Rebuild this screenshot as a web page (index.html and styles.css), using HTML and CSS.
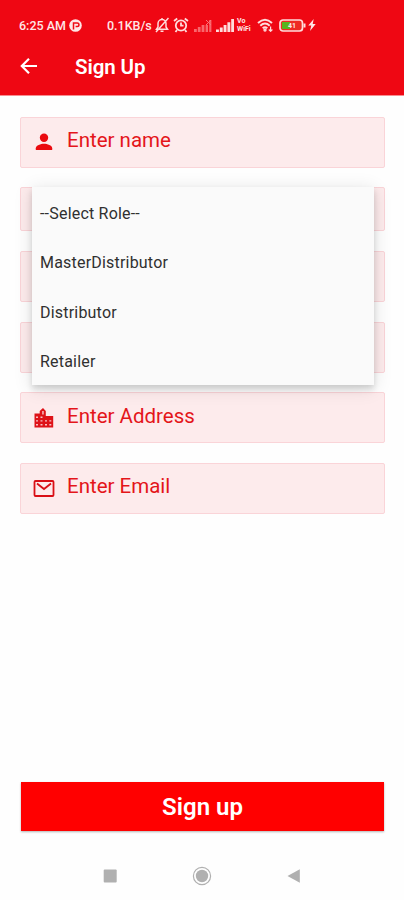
FILE: index.html
```html
<!DOCTYPE html>
<html lang="en">
<head>
  <meta charset="UTF-8">
  <meta name="viewport" content="width=device-width, initial-scale=1">
  <title>Sign Up</title>
  <link rel="stylesheet" href="styles.css">
</head>
<body>
  <div class="screen">
    <header class="top">
      <div class="status-bar">
        <span class="time">6:25 AM</span>
        <svg class="app-dot" viewBox="0 0 13 13" width="13" height="13">
          <circle cx="6.5" cy="6.5" r="6.3" fill="#ffe6e6"/>
          <path d="M4.5 10.5V4h3.7a1.7 1.7 0 0 1 0 3.5H6.6" fill="none" stroke="#ef0a14" stroke-width="1.5"/>
        </svg>
        <span class="speed">0.1KB/s</span>
        <div class="status-icons">
          <svg class="bell" viewBox="0 0 14 16" width="14" height="16" fill="none" stroke="#ffdcdc" stroke-width="1.5">
            <path d="M1.5 12.2h11L11 10V6.5a4 4 0 0 0-8 0V10zM5.5 14.3h3M7 1v2M1 15L13.5 1"/>
          </svg>
          <svg class="alarm" viewBox="0 0 16 16" width="16" height="16" fill="none" stroke="#ffdcdc" stroke-width="1.8">
            <circle cx="8" cy="8.5" r="5.2"/>
            <path d="M1 4l3.2-2.5M15 4l-3.2-2.5M8 5.5v3.2h2.5M4 13l-1.5 2M12 13l1.5 2"/>
          </svg>
          <svg class="signal-off" viewBox="0 0 18 13" width="18" height="13">
            <path d="M0 10h2.8v3H0zM3.8 8h2.8v5H3.8zM7.6 6h2.8v7H7.6zM11.6 6h2.4v7h-2.4zM15.2 1h2.2v12h-2.2z" fill="#f9666c"/>
            <path d="M12 1l5 5M17 1l-5 5" stroke="#f9777c"/>
          </svg>
          <svg class="signal" viewBox="0 0 18 13" width="18" height="13" fill="#ffdcdc">
            <path d="M0 10.5h2.9V13H0zM3.8 8.5h2.9V13H3.8zM7.6 6h2.9v7H7.6zM11.4 3.2h2.9V13h-2.9zM15.2 0H18v13h-2.8z"/>
          </svg>
          <span class="vowifi"><b>Vo</b><b>WiFi</b></span>
          <svg class="wifi" viewBox="0 0 17 14" width="17" height="14" fill="none" stroke="#ffdcdc" stroke-width="2">
            <path d="M1 5q7-6.5 14 0M3.3 7.7q4.7-4.3 9.4 0M5.7 10.2q2.3-2 4.6 0"/>
            <circle cx="8" cy="12" r=".7"/>
            <path d="M13.6 8.5v4.8M11.8 11.5l1.8 1.8 1.8-1.8" stroke-width="1.2"/>
          </svg>
          <svg class="battery" viewBox="0 0 27 13" width="27" height="13">
            <rect x="1" y="1" width="22.5" height="11" rx="3" fill="#ee2a24" stroke="#ffdcdc" stroke-width="1.7"/>
            <path d="M3 3h8v7H3z" fill="#55b51d"/>
            <path d="M24.5 4.5h2v4h-2z" fill="#ffdcdc"/>
            <text x="9" y="9.3" class="battery-level">41</text>
          </svg>
          <svg class="bolt" viewBox="0 0 8 12" width="8" height="12" fill="#ffe6e6">
            <path d="M5.7 0L.3 6.5h3L2 12l5.7-7h-3z"/>
          </svg>
        </div>
      </div>
      <div class="app-bar">
        <svg class="back" viewBox="0 0 18 18" width="18" height="18" fill="none" stroke="#fff" stroke-width="2.2">
          <path d="M17 9H2.2M9 1.8L1.8 9 9 16.2"/>
        </svg>
        <h1>Sign Up</h1>
      </div>
    </header>

    <form class="signup-form">
      <div class="field">
        <svg class="icon" viewBox="0 0 24 24" width="24" height="24" fill="#ea0b10">
          <circle cx="12" cy="7.8" r="4.2"/>
          <path d="M3.8 20v-1.8c0-3 5-4.5 8.2-4.5s8.2 1.5 8.2 4.5V20z"/>
        </svg>
        <span class="label">Enter name</span>
      </div>
      <div class="field field-short"></div>
      <div class="field field-gap"></div>
      <div class="field"></div>
      <div class="field">
        <svg class="icon" viewBox="0 0 24 24" width="24" height="24">
          <path d="M2.5 21.5V7.5h5.2V5L11 2l2.8 3v5h7.4v11.5z" fill="#de1218"/>
          <path d="M4 10.6h2v1.3H4zM8.5 10.6h2v1.3h-2zM4 14.2h2v1.4H4zM8.5 14.2h2v1.4h-2zM13 14.2h2v1.4h-2zM17.3 14.2h2v1.4h-2zM4 18h2v1.4H4zM8.5 18h2v1.4h-2zM13 18h2v1.4h-2zM17.3 18h2v1.4h-2zM10.2 5h1.5v3.6h-1.5z" fill="#f8c0c3"/>
        </svg>
        <span class="label">Enter Address</span>
      </div>
      <div class="field">
        <svg class="icon" viewBox="0 0 24 24" width="24" height="24" fill="none" stroke="#d90f16" stroke-width="1.8">
          <rect x="2.5" y="5" width="19" height="15" rx="1"/>
          <path d="M5 7.5l7 5.5 7-5.5"/>
        </svg>
        <span class="label">Enter Email</span>
      </div>

      <ul class="role-menu">
        <li>--Select Role--</li>
        <li>MasterDistributor</li>
        <li>Distributor</li>
        <li>Retailer</li>
      </ul>
    </form>

    <button class="submit" type="button">Sign up</button>

    <nav class="nav-bar">
      <svg viewBox="0 0 20 20" width="20" height="20"><rect x="3.7" y="3.5" width="13" height="13" rx="1" fill="#b0b0b0"/></svg>
      <svg viewBox="0 0 20 20" width="20" height="20"><circle cx="10" cy="10" r="8.6" fill="none" stroke="#b0b0b0" stroke-width="1.2"/><circle cx="10" cy="10" r="6.2" fill="#b0b0b0"/></svg>
      <svg viewBox="0 0 20 20" width="20" height="20"><path d="M3.5 10L15.8 3.3v13.4z" fill="#b0b0b0"/></svg>
    </nav>
  </div>
</body>
</html>
```
FILE: styles.css
```css
* {
  box-sizing: border-box;
  margin: 0;
  padding: 0;
}

body {
  font-family: Roboto, "Liberation Sans", sans-serif;
  background-color: #fefefe;
}

.screen {
  display: flex;
  flex-direction: column;
  width: 404px;
  height: 900px;
  overflow: hidden;
}

svg {
  display: block;
  flex: none;
}

/* header */
.top {
  height: 96px;
  background-color: #ef0713;
  border-bottom: 1px solid #f88c90;
}

.status-bar {
  display: flex;
  align-items: center;
  height: 50px;
  padding-left: 19px;
  color: #ffe6e6;
  font-size: 12.5px;
  font-weight: 500;
  white-space: nowrap;
}

.time {
  width: 50px;
}

.speed {
  width: 48px;
  margin-left: 25px;
}

.status-icons {
  display: flex;
  align-items: center;
}

.alarm {
  margin-left: 4px;
}

.signal-off {
  margin-left: 5px;
}

.signal {
  margin-left: 4px;
}

.vowifi {
  display: flex;
  flex-direction: column;
  width: 17px;
  margin-left: 3px;
  font-size: 7px;
  line-height: 8px;
}

.wifi {
  margin-left: 3px;
}

.battery {
  margin-left: 5px;
}

.battery-level {
  font-size: 7px;
  font-weight: 700;
  fill: #ffe6e6;
}

.bolt {
  margin-left: 2px;
}

.app-bar {
  display: flex;
  align-items: center;
  height: 34px;
  padding-left: 20px;
}

.back {
  margin-bottom: 3px;
}

h1 {
  margin-left: 37px;
  color: #ffffff;
  font-size: 20.5px;
  font-weight: 600;
  letter-spacing: -0.1px;
}

/* form */
.signup-form {
  position: relative;
  display: flex;
  flex-direction: column;
  gap: 19.5px;
  padding: 20.5px 19px 0 20px;
}

.field {
  display: flex;
  align-items: center;
  height: 51px;
  padding-left: 11px;
  background-color: #fdebec;
  border: 1px solid #fad4d8;
  border-radius: 2px;
}

.field-short {
  height: 44px;
}

.field-gap {
  margin-top: 0.5px;
}

.label {
  margin: 0 0 4px 11px;
  color: #e4151a;
  font-size: 20.5px;
}

/* dropdown over the fields */
.role-menu {
  position: absolute;
  top: 91px;
  left: 32px;
  width: 342px;
  height: 198px;
  background-color: #fafafa;
  box-shadow: 0 4px 6px rgba(0, 0, 0, 0.14), 0 3px 18px rgba(0, 0, 0, 0.12);
  list-style: none;
}

.role-menu li {
  display: flex;
  align-items: center;
  height: 49.5px;
  padding: 3px 0 0 8px;
  color: #303030;
  font-size: 16px;
  letter-spacing: 0.2px;
}

.submit {
  height: 49px;
  margin: auto 20px 19px 21px;
  background-color: #ff0000;
  border: none;
  box-shadow: 0 1px 2px rgba(0, 0, 0, 0.3);
  color: #ffffff;
  font-family: inherit;
  font-size: 24px;
  font-weight: 600;
}

.nav-bar {
  display: flex;
  justify-content: space-between;
  align-items: center;
  height: 50px;
  padding: 2px 100px 0 100px;
}
```
